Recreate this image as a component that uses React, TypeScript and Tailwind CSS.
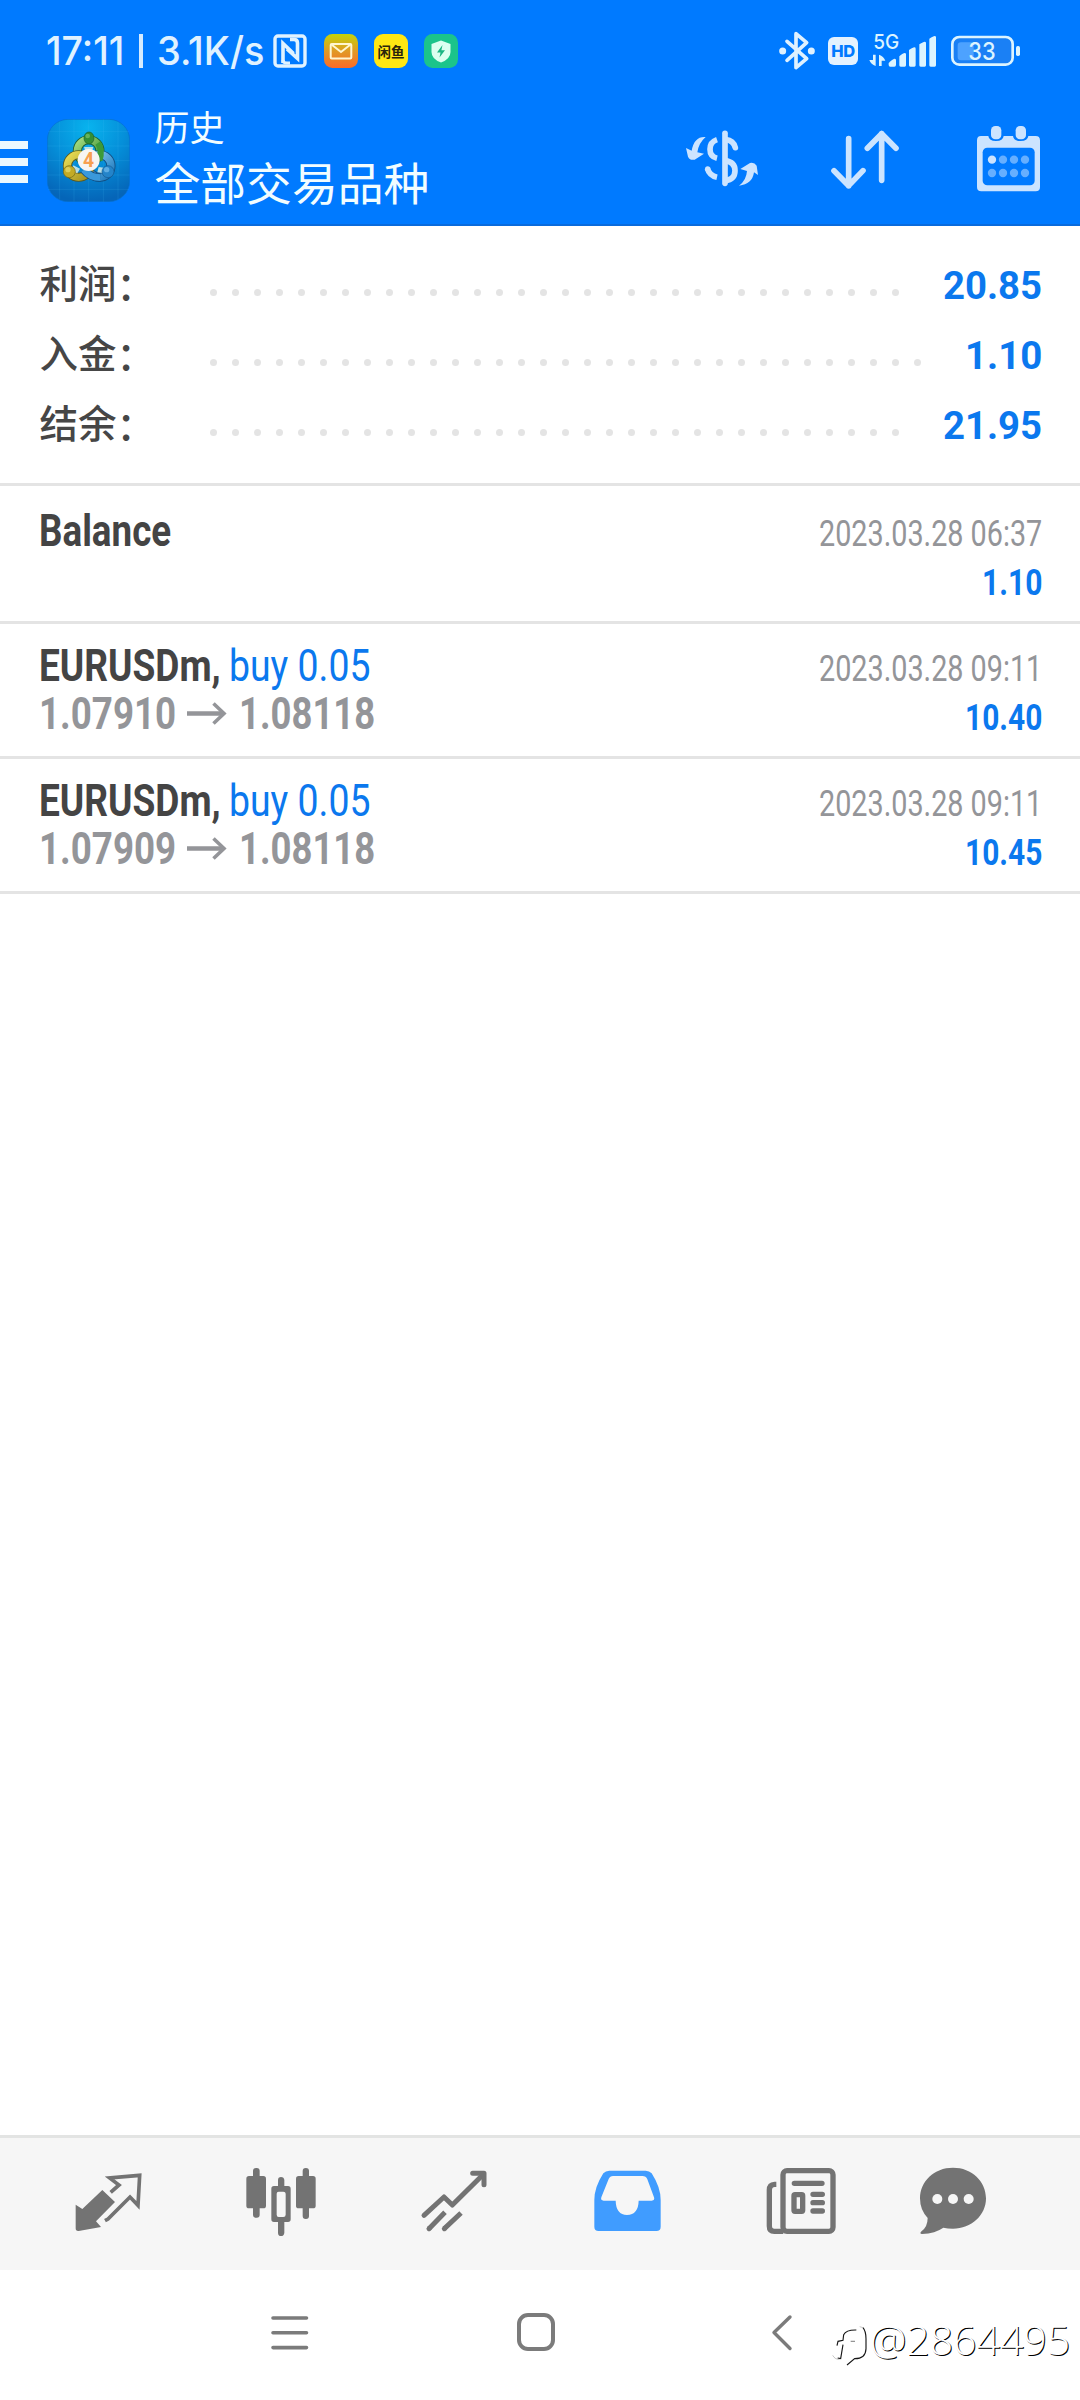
import { useLayoutEffect, useRef, useState, type ReactNode } from 'react';

/** Condenses or widens a single line of text so that it fills its box. */
function Fit({ className = '', children }: { className?: string; children: ReactNode }) {
  const box = useRef<HTMLDivElement>(null);
  const text = useRef<HTMLSpanElement>(null);
  const [scale, setScale] = useState(1);
  useLayoutEffect(() => {
    if (box.current && text.current) setScale(box.current.offsetWidth / text.current.offsetWidth);
  }, []);
  return (
    <div ref={box} className={`shrink-0 whitespace-nowrap ${className}`}>
      <span ref={text} className="inline-block origin-left" style={{ transform: `scaleX(${scale})` }}>
        {children}
      </span>
    </div>
  );
}

function StatusBar() {
  return (
    <div className="flex h-[102px] items-center text-[#e0f2ff]">
      <div className="flex h-full items-center pl-[46px] font-['Inter'] text-[39px] leading-[102px] font-medium">
        <Fit className="w-[78px]">17:11</Fit>
        <div className="ml-[15px] h-[34px] w-[4px] bg-[#d5ebff]" />
        <Fit className="ml-[14px] w-[107px]">3.1K/s</Fit>
      </div>
      <svg className="ml-[9px] h-[34px] w-[34px]" viewBox="0 0 34 34" fill="none" stroke="#e0f2ff">
        <rect x="2" y="2" width="30" height="30" rx="3" strokeWidth="3.4" />
        <path d="M10 29V9.500L20.500 19.500" strokeWidth="3.600" />
        <path d="M17 5.500h4Q24.500 5.500 24.500 9V24.500L14 15" strokeWidth="3.600" />
        <path d="M10 26q0 3 4 3h3" strokeWidth="3" />
      </svg>
      <svg className="ml-[17px] h-[34px] w-[34px]" viewBox="0 0 34 34">
        <defs>
          <linearGradient id="mail" x1="0" y1="0" x2="0" y2="1">
            <stop offset="0" stopColor="#c3d30b" />
            <stop offset="0.5" stopColor="#e09a25" />
            <stop offset="1" stopColor="#fb6a28" />
          </linearGradient>
        </defs>
        <rect width="34" height="34" rx="8.500" fill="url(#mail)" />
        <rect x="6.700" y="10" width="20.600" height="14.600" rx="1" fill="none" stroke="#fff6d0" strokeWidth="2" />
        <path d="M7.500 10.500L17 18l9.500-7.500" fill="none" stroke="#fff6d0" strokeWidth="2" />
      </svg>
      <div className="ml-[16px] flex h-[34px] w-[34px] items-center justify-center rounded-[9px] bg-[#ffe713] font-['Noto_Sans_CJK_SC',sans-serif] text-[13.500px] leading-[34px] font-bold whitespace-nowrap text-[#29240c]">
        闲鱼
      </div>
      <svg className="ml-[16px] h-[34px] w-[34px]" viewBox="0 0 34 34">
        <rect width="34" height="34" rx="8.500" fill="#1bc48b" />
        <path d="M17 6.500L26.500 10v8q0 7-9.500 10.500Q7.500 25 7.500 18v-8z" fill="#dcfff0" />
        <path d="M18.500 11L13 18.500h3.500L15.500 23.500 21 16.300h-3.600z" fill="#1bb583" />
      </svg>

      <svg className="ml-auto h-[40px] w-[36px]" viewBox="357 93 108 120" fill="none" stroke="#dff1ff" strokeWidth="11" strokeLinecap="round" strokeLinejoin="round">
        <path d="M381 124L440 176 408 203V101L440 128 381 181" />
        <circle cx="368" cy="153" r="6" fill="#dff1ff" strokeWidth="9" />
        <circle cx="454" cy="153" r="6" fill="#dff1ff" strokeWidth="9" />
      </svg>
      <div className="ml-[13px] flex h-[28px] w-[30px] items-center justify-center rounded-[6px] bg-[#e4f2ff] font-['Inter'] text-[16.500px] leading-[28px] font-extrabold tracking-[-0.5px] text-[#007aff]">
        HD
      </div>
      <svg className="ml-[11px] h-[40px] w-[70px]" viewBox="630 94 210 120" fill="#dcf4ff">
        <text x="643" y="147" fontFamily="Inter" fontSize="60" fontWeight="500" textLength="78" lengthAdjust="spacingAndGlyphs">5G</text>
        <path d="M642 165h8v34q-14-4-19-18h11zM660 165q14 4 19 18h-11v16h-8z" />
        <path d="M689 190q12-12 17-13 5 0 5 4v14q0 6-5 6h-12q-5 0-5-5z" />
        <path d="M721 170q12-10 16-10 4 0 4 4v33q0 4-4 4h-12q-4 0-4-4zM750 151q12-8 16-8 4 0 4 4v50q0 4-4 4h-12q-4 0-4-4zM781 134q12-8 16-8 4 0 4 4v67q0 4-4 4h-12q-4 0-4-4zM811 117q12-8 16-8 4 0 4 4v84q0 4-4 4h-12q-4 0-4-4z" />
      </svg>
      <svg className="mr-[60px] ml-[12px] h-[32px] w-[69px]" viewBox="873 105 207 96">
        <rect x="877" y="111" width="181" height="83" rx="21" fill="#1a80f5" stroke="#dcf4ff" strokeWidth="8" />
        <rect x="893" y="127" width="48" height="54" rx="10" fill="#4da2ff" />
        <text x="925" y="181" fontFamily="Inter" fontSize="73" fontWeight="500" fill="#dcf4ff" textLength="82" lengthAdjust="spacingAndGlyphs">33</text>
        <rect x="1068" y="138" width="12" height="30" rx="5" fill="#dcf4ff" />
      </svg>
    </div>
  );
}

function AppLogo() {
  return (
    <svg className="mt-[17px] ml-[18.500px] h-[83px] w-[83px]" viewBox="139 26 249 249">
      <defs>
        <radialGradient id="tile" cx="0.5" cy="0.1" r="0.9">
          <stop offset="0" stopColor="#08b3ee" />
          <stop offset="0.5" stopColor="#058fd9" />
          <stop offset="1" stopColor="#0565b8" />
        </radialGradient>
        <linearGradient id="green" x1="0" y1="0" x2="1" y2="1">
          <stop offset="0" stopColor="#a5db80" />
          <stop offset="1" stopColor="#2f8c2c" />
        </linearGradient>
        <linearGradient id="yellow" x1="0" y1="0" x2="1" y2="1">
          <stop offset="0" stopColor="#e6dc55" />
          <stop offset="1" stopColor="#a5901b" />
        </linearGradient>
        <linearGradient id="azure" x1="0" y1="0" x2="1" y2="1">
          <stop offset="0" stopColor="#8fd0f5" />
          <stop offset="1" stopColor="#1b78bd" />
        </linearGradient>
      </defs>
      <rect x="140" y="27" width="247" height="247" rx="62" fill="url(#tile)" stroke="#0870cf" strokeWidth="2" />
      <path d="M177 34v232M220 27v247M264 27v247M308 27v247M352 34v232M142 64h243M140 107h247M140 151h247M140 194h247M142 237h243" stroke="#4fc3f5" strokeOpacity="0.22" strokeWidth="2" fill="none" />
      <g fill="none">
        <circle cx="264" cy="122" r="34" stroke="#1d5f35" strokeWidth="27" />
        <circle cx="264" cy="122" r="34" stroke="url(#green)" strokeWidth="22" />
        <circle cx="297" cy="167" r="34" stroke="#124f83" strokeWidth="27" />
        <circle cx="297" cy="167" r="34" stroke="url(#azure)" strokeWidth="22" />
        <circle cx="234" cy="167" r="34" stroke="#5b5a20" strokeWidth="27" />
        <circle cx="234" cy="167" r="34" stroke="url(#yellow)" strokeWidth="22" />
        <path d="M249 178Q268 202 300 202" stroke="#124f83" strokeWidth="25" />
        <path d="M249 178Q268 202 300 202" stroke="#3a99db" strokeWidth="20" />
        <path d="M292 98Q306 118 296 150" stroke="#3c9a39" strokeWidth="19" />
      </g>
      <path d="M218 165l20 10-8 14-18-6zM294 170l16 2-4 16-16-2zM250 110h28l-4 12h-20z" fill="#e5f4e8" fillOpacity="0.8" />
      <ellipse cx="265" cy="83" rx="15" ry="18" fill="#348f35" stroke="#1b5d2c" strokeWidth="2" />
      <ellipse cx="261" cy="77" rx="7" ry="7" fill="#7cc26d" fillOpacity="0.7" />
      <circle cx="206" cy="184" r="18" fill="#c3ab25" stroke="#6d6418" strokeWidth="2" />
      <circle cx="202" cy="178" r="8" fill="#e8dd6d" fillOpacity="0.7" />
      <circle cx="322" cy="184" r="18" fill="#2484c9" stroke="#14588f" strokeWidth="2" />
      <circle cx="318" cy="178" r="8" fill="#76bdec" fillOpacity="0.7" />
      <circle cx="264" cy="149" r="33" fill="#f7f5f2" />
      <text x="264" y="169" textAnchor="middle" fontFamily="Roboto" fontSize="58" fontWeight="700" fill="#f7a050">4</text>
    </svg>
  );
}

function Header() {
  return (
    <div className="flex h-[122px] items-start">
      <div className="mt-[39px] flex w-[28px] flex-col gap-[9px]">
        <div className="h-[8px] bg-[#ebf8ff]" />
        <div className="h-[8px] bg-[#ebf8ff]" />
        <div className="h-[8px] bg-[#ebf8ff]" />
      </div>
      <AppLogo />
      <div className="mt-[4px] ml-[25px] flex flex-col gap-[8px] font-['Noto_Sans_CJK_SC',sans-serif] whitespace-nowrap text-[#f2fdff]">
        <div className="text-[35px] leading-[40px]">历史</div>
        <div className="text-[45.800px] leading-[54px]">全部交易品种</div>
      </div>
      <svg className="ml-auto h-[122px] w-[84px]" viewBox="60 306 252 366" fill="none" stroke="#cce4ff" strokeWidth="17">
        <path d="M195 400V550" strokeLinecap="round" />
        <path d="M198 419q22 2 28 24" strokeLinecap="round" />
        <path d="M195 482q30 4 30 30t-30 30" />
        <path d="M171 419Q150 426 150 448t21 27" />
        <path d="M142 505q6 22 29 27" strokeLinecap="butt" />
        <circle cx="143" cy="507" r="8" fill="#cce4ff" stroke="none" />
        <path d="M137 411Q103 408 95 452L78 444l6 26q6 12 20 9l28-18-20-4q4-28 25-46zM237 557q40-4 45-40l12 8-4-28q-7-11-20-8l-29 18 20 6q-2 28-24 44z" fill="#cce4ff" stroke="none" />
      </svg>
      <svg className="ml-[63px] h-[122px] w-[76px]" viewBox="501 306 228 366" fill="none" stroke="#cce4ff" strokeWidth="17" strokeLinecap="round" strokeLinejoin="round">
        <path d="M566 416V557M522 512L566 557 609 512" />
        <path d="M665 541V401M622 445L665 401 708 445" />
      </svg>
      <svg className="mr-[37px] ml-[71px] h-[122px] w-[69px]" viewBox="942 306 207 366">
        <path d="M963 408h22q2 15 23 15t23-15h28q2 15 23 15t23-15h22q13 0 13 13v140q0 13-13 13H964q-13 0-13-13V421q0-13 12-13z" fill="#cce4ff" />
        <rect x="968" y="443" width="156" height="113" rx="14" fill="#007aff" />
        <rect x="993" y="378" width="31" height="40" rx="13" fill="#cce4ff" />
        <rect x="1067" y="378" width="31" height="40" rx="13" fill="#cce4ff" />
        <circle cx="996" cy="479" r="12.500" fill="#cce4ff" />
        <g fill="#66afff">
          <circle cx="1029" cy="479" r="12.500" />
          <circle cx="1062" cy="479" r="12.500" />
          <circle cx="1095" cy="479" r="12.500" />
          <circle cx="996" cy="519" r="12.500" />
          <circle cx="1029" cy="519" r="12.500" />
          <circle cx="1062" cy="519" r="12.500" />
          <circle cx="1095" cy="519" r="12.500" />
        </g>
      </svg>
    </div>
  );
}

const summary = [
  { label: '利润', value: '20.85', dots: 32, box: 'w-[99px]' },
  { label: '入金', value: '1.10', dots: 33, box: 'w-[77px]' },
  { label: '结余', value: '21.95', dots: 32, box: 'w-[99px]' },
];

function SummaryRow({ label, value, dots, box }: (typeof summary)[number]) {
  return (
    <div className="flex h-[70px] items-center pr-[38.500px] pl-[39.500px]">
      <div className="-mt-[6px] flex w-[170px] font-['Noto_Sans_CJK_SC',sans-serif] text-[38.500px] leading-[70px] font-medium whitespace-nowrap text-[#464646]">
        {label}
        <span className="mt-[2px]">：</span>
      </div>
      <div className="mt-[15px] flex gap-[15px]">
        {Array.from({ length: dots }, (_, i) => (
          <div key={i} className="h-[7px] w-[7px] rounded-full bg-[#e4e4e4]" />
        ))}
      </div>
      <Fit className={`mt-[2px] ml-auto font-['Roboto'] text-[39.500px] leading-[70px] font-bold text-[#0b78ee] ${box}`}>{value}</Fit>
    </div>
  );
}

const deals = [
  { time: '2023.03.28 06:37', profit: '1.10', box: 'w-[60px]', title: 'Balance' },
  { time: '2023.03.28 09:11', profit: '10.40', box: 'w-[77px]', open: '1.07910', close: '1.08118' },
  { time: '2023.03.28 09:11', profit: '10.45', box: 'w-[77px]', open: '1.07909', close: '1.08118' },
];

function DealRow({ time, profit, box, title, open, close }: (typeof deals)[number]) {
  return (
    <div className={`flex justify-between border-b-[3px] border-[#e4e4e4] pr-[38px] pl-[39px] font-['Roboto'] ${title ? 'h-[138px] pt-[20px]' : 'h-[135px] pt-[17px]'}`}>
      <div>
        {title ? (
          <Fit className="w-[132px] text-[44px] leading-[50px] font-bold text-[#444]">{title}</Fit>
        ) : (
          <>
            <div className="flex text-[44px] leading-[50px]">
              <Fit className="w-[182px] font-bold text-[#444]">EURUSDm,</Fit>
              <Fit className="ml-[8px] w-[141px] text-[#0b78ee]">buy 0.05</Fit>
            </div>
            <div className="flex text-[44px] leading-[47px] font-bold text-[#949599]">
              <Fit className="w-[137px]">{open}</Fit>
              <svg className="ml-[10px] h-[47px] w-[41px]" viewBox="0 0 41 47" fill="none" stroke="#949599">
                <path d="M1 22.500H37" strokeWidth="4.500" />
                <path d="M27.500 12.500L38 22.500 27.500 32.500" strokeWidth="3.600" />
              </svg>
              <Fit className="ml-[12px] w-[136px]">{close}</Fit>
            </div>
          </>
        )}
      </div>
      <div className="flex flex-col items-end pt-[3px] text-[36.500px]">
        <Fit className="w-[223px] leading-[50px] text-[#949599]">{time}</Fit>
        <Fit className={`leading-[47px] font-bold text-[#0b78ee] ${box}`}>{profit}</Fit>
      </div>
    </div>
  );
}

function TabBar() {
  const tab = 'h-[132px] w-[173px] shrink-0';
  return (
    <div className="flex h-[135px] overflow-hidden border-t-[3px] border-[#e3e4e3] bg-[#f6f6f6] pl-[22px]">
      <svg className={tab} viewBox="-54 54 519 396">
        <path d="M187 210L225 246 168 304 183 321 116 333Q107 334 107 325V254L127 267z" fill="#737373" />
        <path d="M212 217L237 195 209 174 299 166 294 256 270 231 204 297 195 302" fill="none" stroke="#737373" strokeWidth="11" />
      </svg>
      <svg className={tab} viewBox="465 54 519 396" fill="#737373">
        <rect x="619" y="168" width="59" height="97" rx="8" />
        <rect x="639" y="144" width="20" height="149" rx="9" />
        <rect x="768" y="168" width="59" height="97" rx="8" />
        <rect x="788" y="144" width="19" height="153" rx="9" />
        <path fillRule="evenodd" d="M702 198h42q8 0 8 8v92q0 8-8 8h-42q-8 0-8-8v-92q0-8 8-8zm14 17q-6 0-6 6v63q0 7 6 7h14q7 0 7-7v-63q0-6-7-6z" />
        <path d="M714 200v-20q0-9 9-9t10 9v20zM714 304v34q0 10 9 10t10-10v-34z" />
      </svg>
      <svg className={tab} viewBox="984 54 519 396" fill="none" stroke="#737373" strokeWidth="15" strokeLinecap="round" strokeLinejoin="round">
        <path d="M1152 286L1212 231 1237 255 1328 165" />
        <path d="M1298 160H1332V194" />
        <path d="M1167 326L1215 277M1213 326L1263 279" strokeLinecap="butt" />
        <path d="M1167 326l1-1M1213 326l1-1" />
      </svg>
      <svg className={tab} viewBox="-57 54 519 396">
        <path fillRule="evenodd" fill="#409cff" d="M148 152H257Q268 152 275 160Q302 202 302 240V320Q302 333 289 333H116Q103 333 103 320V240Q103 202 130 160Q137 152 148 152zM159 168Q150 168 146 177L124 232Q121 242 131 242H167Q168 284 201 285Q235 284 236 242H275Q285 242 282 232L262 178Q258 168 247 168z" />
      </svg>
      <svg className={tab} viewBox="462 54 519 396" fill="none" stroke="#737373" strokeWidth="16">
        <rect x="669" y="152" width="150" height="182" rx="12" />
        <path d="M649 193H644Q628 194 628 210V318Q628 334 643 334H670" />
        <path d="M703 190H786M759 223H787M759 248H787M759 273H787" strokeLinecap="round" />
        <rect x="702" y="224" width="26" height="50" rx="3" />
      </svg>
      <svg className={tab} viewBox="981 54 519 396" fill="#737373">
        <path d="M1179 143C1236 143 1278 184 1278 235S1234 326 1179 326Q1163 326 1150 323Q1126 340 1086 342Q1078 341 1083 335Q1103 322 1103 294Q1080 270 1080 235C1080 184 1122 143 1179 143z" />
        <g fill="#f6f6f6">
          <circle cx="1132" cy="237" r="15" />
          <circle cx="1179" cy="237" r="15" />
          <circle cx="1226" cy="237" r="15" />
        </g>
      </svg>
    </div>
  );
}

function SystemNav() {
  return (
    <div className="flex h-[130px] items-start bg-white">
      <svg className="mt-[44px] ml-[271px] h-[38px] w-[38px]" viewBox="0 0 38 38" fill="none" stroke="#7b7b7b" strokeWidth="3.600" strokeLinecap="round">
        <path d="M2 4H35.500M2 18.800H35.500M2 33.600H35.500" />
      </svg>
      <div className="mt-[43px] ml-[208px] h-[38px] w-[38px] rounded-[11px] border-[4px] border-[#7b7b7b]" />
      <svg className="mt-[43px] ml-[216px] h-[40px] w-[24px]" viewBox="0 0 24 40" fill="none" stroke="#7b7b7b" strokeWidth="3.400" strokeLinecap="round" strokeLinejoin="round">
        <path d="M19 4L3 19.500 19 35.500" />
      </svg>
      <svg className="mt-[52px] ml-[36px] h-[44px] w-[36px]" viewBox="32 50 108 132" fill="none" stroke="#161616" strokeWidth="3.400">
        <path d="M50 121L53 108 68 105 70 88Q78 73 108 74" />
        <path d="M128 67Q137 78 137 100V130Q136 160 103 160L80 179" />
        <path d="M68 118L61 160 52 158" />
        <path d="M91 108H104" strokeOpacity="0.5" />
        <path d="M37 150Q44 163 58 162M118 64L128 67" strokeOpacity="0.35" strokeWidth="2" />
      </svg>
      <Fit className="mt-[41px] ml-[3px] w-[200px] font-['Open_Sans'] text-[41px] leading-[56px] font-light text-white [text-shadow:1px_1px_0.5px_#000]">@2864495</Fit>
    </div>
  );
}

export default function App() {
  return (
    <div className="flex h-[2400px] w-[1080px] flex-col overflow-hidden bg-white">
      <div className="h-[226px] border-b-[2px] border-[#0a6bdc] bg-[#007aff]">
        <StatusBar />
        <Header />
      </div>
      <div className="h-[260px] border-b-[3px] border-[#e4e4e4] pt-[24px]">
        {summary.map((row) => (
          <SummaryRow key={row.label} {...row} />
        ))}
      </div>
      {deals.map((deal) => (
        <DealRow key={deal.profit} {...deal} />
      ))}
      <div className="flex-1" />
      <TabBar />
      <SystemNav />
    </div>
  );
}
